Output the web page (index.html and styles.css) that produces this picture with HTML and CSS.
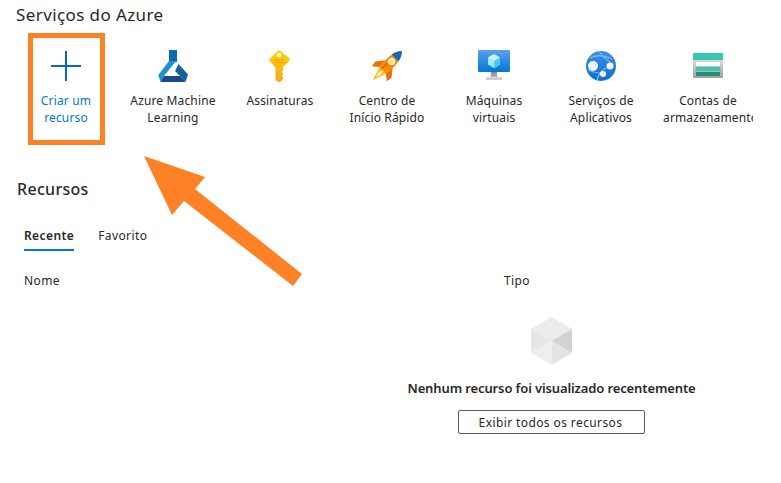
FILE: index.html
```html
<!DOCTYPE html>
<html lang="pt-BR">
<head>
<meta charset="utf-8">
<title>Serviços do Azure</title>
<link rel="stylesheet" href="styles.css">
</head>
<body>
<main class="page">
  <h2 class="section-title">Serviços do Azure</h2>
  <div class="tiles">
    <a class="tile tile-create">
      <svg class="tile-icon" viewBox="0 0 32 32"><path d="M15 1h2v30h-2zM1 15h30v2H1z" fill="#0a62d6"/></svg>
      <span>Criar um recurso</span>
    </a>
    <a class="tile">
      <svg class="tile-icon" viewBox="0 0 32 32">
        <path d="M12 0h8v12h-8z" fill="#0a6dab"/>
        <path d="M12 11 1.300 25l2.200 7L7 26l10-12.500L20 11z" fill="#1b93d6"/>
        <path d="M21.500 14 31 24.500 28.500 32 23 26l-5-5z" fill="#14639c"/>
        <path d="M7 26h16l5.500 6h-25z" fill="#1a4a85"/>
      </svg>
      <span>Azure Machine Learning</span>
    </a>
    <a class="tile">
      <svg class="tile-icon" viewBox="0 0 32 32">
        <defs><linearGradient id="key" x1="0" y1="0" x2="0" y2="1"><stop offset="0" stop-color="#ffd400"/><stop offset="1" stop-color="#f9a31a"/></linearGradient></defs>
        <path d="M13.500 1 6 8.500a2 2 0 0 0 0 3l5.500 6V30l3 2h1.500l3-3v-2l-1.500-1 1.500-1.500v-1.500l-1.500-1 1.500-1.500v-3.500l6-6a2 2 0 0 0 0-3L16.500 1a2 2 0 0 0-3 0z" fill="url(#key)"/>
        <circle cx="15" cy="5" r="2.200" fill="#fff"/>
        <path d="M10 9.500h10v1H10zM10 12h10v1H10z" fill="#f59a1b"/>
        <path d="M14 18h1.500v13H14z" fill="#fcb714"/>
      </svg>
      <span>Assinaturas</span>
    </a>
    <a class="tile">
      <svg class="tile-icon" viewBox="0 0 32 32">
        <g transform="rotate(45 16 16)">
          <path d="M11 13 4.500 21l1 6 6-5zM21 13l6.500 8-1 6-6-5z" fill="#e8710a"/>
          <path d="M16 -5c5 5 6.500 13 4.500 27h-9C9.500 8 11-0 16-5z" fill="#f98a04"/>
          <path d="M16-5c2.600 2.600 4 5.800 4.700 9.500H11.300C12-.7 13.400-2.400 16-5z" fill="#1467b8"/>
          <path d="M11.500 22h9L16 36z" fill="#fbb616"/>
          <path d="M16 22l2 4-2 6-2-6z" fill="#fff3c4"/>
          <circle cx="16" cy="9.500" r="3" fill="#ffe37a" stroke="#fff" stroke-width="1"/>
          <path d="M13.500 14h1.500v8h-1.500z" fill="#e35e00"/>
        </g>
      </svg>
      <span>Centro de Início Rápido</span>
    </a>
    <a class="tile">
      <svg class="tile-icon" viewBox="0 0 32 32">
        <defs>
          <linearGradient id="vm" x1="0" y1="0" x2="0" y2="1"><stop offset="0" stop-color="#5ea0ef"/><stop offset="1" stop-color="#0078d4"/></linearGradient>
          <linearGradient id="stand" x1="0" y1="0" x2="0" y2="1"><stop offset="0" stop-color="#8a8a8a"/><stop offset="1" stop-color="#d4d4d4"/></linearGradient>
        </defs>
        <rect y="0" width="32" height="22" rx="1.200" fill="url(#vm)"/>
        <path d="M13 22h6l.5 5h-7zM8 27.500h16V30H8z" fill="url(#stand)"/>
        <path d="M16 4l6 3.500v7L16 18l-6-3.500v-7z" fill="#9cebff"/>
        <path d="M16 11l6-3.500v7L16 18z" fill="#50c7f5"/>
        <path d="M16 4l6 3.500L16 11l-6-3.500z" fill="#c3f1ff"/>
      </svg>
      <span>Máquinas virtuais</span>
    </a>
    <a class="tile">
      <svg class="tile-icon" viewBox="0 0 32 32">
        <defs><linearGradient id="app" x1="0" y1="0" x2="0" y2="1"><stop offset="0" stop-color="#3b8fe8"/><stop offset="1" stop-color="#0a6fd0"/></linearGradient></defs>
        <circle cx="16" cy="16" r="15" fill="url(#app)"/>
        <path d="M5 8c6-3 14-3 22 1M14 1c3 5 7 9 14 13M12 31c1-6 3-10 9-13M3 20c5 2 12 4 18 3" fill="none" stroke="#7fb8f0" stroke-width="1.300"/>
        <circle cx="8" cy="16" r="5" fill="#f2f2f2"/>
        <circle cx="25" cy="16" r="3.500" fill="#f2f2f2"/>
        <circle cx="18" cy="24" r="3" fill="#f2f2f2"/>
      </svg>
      <span>Serviços de Aplicativos</span>
    </a>
    <a class="tile">
      <svg class="tile-icon" viewBox="0 0 32 32">
        <defs><linearGradient id="st" x1="0" y1="0" x2="0" y2="1"><stop offset="0" stop-color="#dcdcdc"/><stop offset="1" stop-color="#a0a0a0"/></linearGradient></defs>
        <path d="M1 9h30v18a1 1 0 0 1-1 1H2a1 1 0 0 1-1-1z" fill="url(#st)"/>
        <rect x="1" y="3" width="30" height="7" fill="#37c6b0"/>
        <rect x="4" y="12" width="24" height="4" fill="#fff"/>
        <rect x="4" y="17" width="24" height="4" fill="#37c6b0"/>
        <rect x="4" y="22" width="24" height="4" fill="#2a8a7b"/>
      </svg>
      <span>Contas de armazenamento</span>
    </a>
  </div>

  <h2 class="section-title section-resources">Recursos</h2>
  <nav class="tabs">
    <a class="tab tab-active">Recente</a>
    <a class="tab">Favorito</a>
  </nav>
  <div class="table-head">
    <span>Nome</span>
    <span>Tipo</span>
  </div>
  <div class="empty-wrap">
    <div class="empty">
      <svg class="empty-icon" viewBox="0 0 41 48">
        <path d="M20.500 0 41 12 20.500 24 0 12z" fill="#ececec"/>
        <path d="M0 12l20.500 12L0 36z" fill="#e6e6e6"/>
        <path d="M41 12 20.500 24 41 36z" fill="#d2d2d2"/>
        <path d="M0 36l20.500-12v24z" fill="#eeeeee"/>
        <path d="M41 36 20.500 24v24z" fill="#e4e4e4"/>
      </svg>
      <p class="empty-text">Nenhum recurso foi visualizado recentemente</p>
      <button class="empty-button">Exibir todos os recursos</button>
    </div>
  </div>
</main>

<div class="callout-box"></div>
<svg class="callout-arrow" viewBox="0 0 781 483">
  <path d="M144 156 205 177 195 189 302 274 293 286 184 201 172 215z" fill="#ff8126"/>
</svg>
</body>
</html>
```
FILE: styles.css
```css
* { box-sizing: border-box; }

html, body { height: 100%; }

body {
  margin: 0;
  position: relative;
  overflow: hidden;
  background: #fff;
  color: #292827;
  font-family: "Noto Sans", "Open Sans", sans-serif;
  font-size: 12px;
}

.page { padding-top: 4px; }

.section-title {
  margin: 0 0 0 16px;
  font-size: 17px;
  line-height: 22px;
  font-weight: 400;
  letter-spacing: 0.4px;
}

.tiles {
  display: flex;
  gap: 17px;
  margin-top: 24px;
  padding-left: 21px;
}

.tile {
  width: 90px;
  flex: none;
  overflow: hidden;
  display: flex;
  flex-direction: column;
  align-items: center;
  text-align: center;
  line-height: 17px;
  letter-spacing: 0.15px;
}

.tile span { width: 100%; }

.tile-create { color: #0078d4; }

.tile-create span { padding: 0 15px; }

.tile-icon {
  width: 32px;
  height: 32px;
  flex: none;
  margin-bottom: 10px;
}

.section-resources {
  margin-top: 52px;
  font-size: 16px;
  font-weight: 500;
  margin-left: 17px;
  letter-spacing: 0.3px;
}

.tabs {
  display: flex;
  gap: 24px;
  margin: 24px 0 0 24px;
}

.tab {
  height: 27px;
  line-height: 20px;
  padding-top: 2px;
  letter-spacing: 0.4px;
}

.tab-active {
  font-weight: 600;
  border-bottom: 2px solid #0078d4;
}

.table-head {
  display: grid;
  grid-template-columns: 480px 1fr;
  margin: 21px 0 0 24px;
  line-height: 18px;
  letter-spacing: 0.4px;
}

.empty-wrap {
  display: flex;
  justify-content: flex-end;
  margin-top: 27px;
}

.empty {
  width: 459px;
  display: flex;
  flex-direction: column;
  align-items: center;
}

.empty-icon {
  width: 41px;
  height: 48px;
  display: block;
}

.empty-text {
  margin: 13px 0 0;
  font-size: 13px;
  line-height: 20px;
  font-weight: 600;
  white-space: nowrap;
  letter-spacing: -0.12px;
}

.empty-button {
  width: 187px;
  height: 24px;
  margin-top: 12px;
  padding: 0 2px 0 0;
  background: #fff;
  border: 1px solid #5c5c5c;
  border-radius: 2px;
  color: #292827;
  font: inherit;
  letter-spacing: 0.4px;
}

.callout-box {
  position: absolute;
  left: 28px;
  top: 33px;
  width: 77px;
  height: 112px;
  border: 5px solid #ff8126;
}

.callout-arrow {
  position: absolute;
  left: 0;
  top: 0;
  width: 781px;
  height: 483px;
  pointer-events: none;
}
```
